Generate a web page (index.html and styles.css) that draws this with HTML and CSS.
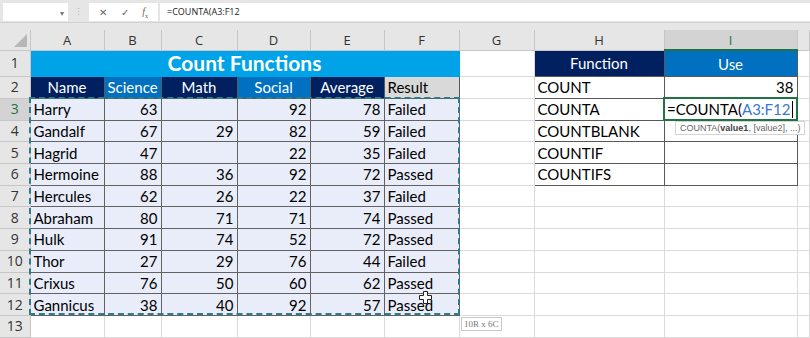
FILE: index.html
```html
<!DOCTYPE html>
<html lang="en">
    <head>
        <meta charset="UTF-8">
        <meta name="viewport" content="width=device-width, initial-scale=1.0">
        <title>Count Functions</title>
        <link rel="stylesheet" href="styles.css">
    </head>
    <body>
        <div class="formula-bar">
            <div class="name-box"><span class="caret">&#9662;</span></div>
            <div class="grip">&#8942;</div>
            <div class="fx-buttons">
                <span class="btn">&#10005;</span>
                <span class="btn">&#10003;</span>
                <span class="btn fx"><i>f</i><sub>x</sub></span>
            </div>
            <div class="formula-input">=COUNTA(A3:F12</div>
        </div>

        <div class="sheet">
            <table class="grid">
                <colgroup>
                    <col class="c-rh">
                    <col class="c-a">
                    <col class="c-b">
                    <col class="c-c">
                    <col class="c-d">
                    <col class="c-e">
                    <col class="c-f">
                    <col class="c-g">
                    <col class="c-h">
                    <col class="c-i">
                    <col>
                </colgroup>
                <tr class="col-heads">
                    <th class="corner"><span class="tri"></span></th>
                    <th>A</th><th>B</th><th>C</th><th>D</th><th>E</th><th>F</th><th>G</th><th>H</th>
                    <th class="sel">I</th>
                    <th></th>
                </tr>
                <tr class="r-title">
                    <th class="rh">1</th>
                    <td colspan="6" class="title">Count Functions</td>
                    <td class="edge"></td>
                    <td class="hd navy">Function</td>
                    <td class="hd blue">Use</td>
                    <td></td>
                </tr>
                <tr class="r-head">
                    <th class="rh">2</th>
                    <td class="hd navy">Name</td>
                    <td class="hd blue">Science</td>
                    <td class="hd navy">Math</td>
                    <td class="hd blue">Social</td>
                    <td class="hd navy">Average</td>
                    <td class="hd grey">Result</td>
                    <td class="edge"></td>
                    <td class="fn">COUNT</td>
                    <td class="fn num">38</td>
                    <td></td>
                </tr>
                <tr>
                    <th class="rh sel">3</th>
                    <td class="d">Harry</td><td class="d num">63</td><td class="d num"></td><td class="d num">92</td><td class="d num">78</td><td class="d">Failed</td>
                    <td class="edge"></td>
                    <td class="fn">COUNTA</td>
                    <td class="fn active">=COUNTA(<span class="ref">A3:F12</span><span class="caret-line"></span></td>
                    <td></td>
                </tr>
                <tr>
                    <th class="rh">4</th>
                    <td class="d">Gandalf</td><td class="d num">67</td><td class="d num">29</td><td class="d num">82</td><td class="d num">59</td><td class="d">Failed</td>
                    <td class="edge"></td>
                    <td class="fn">COUNTBLANK</td>
                    <td class="fn"></td>
                    <td></td>
                </tr>
                <tr>
                    <th class="rh">5</th>
                    <td class="d">Hagrid</td><td class="d num">47</td><td class="d num"></td><td class="d num">22</td><td class="d num">35</td><td class="d">Failed</td>
                    <td class="edge"></td>
                    <td class="fn">COUNTIF</td>
                    <td class="fn"></td>
                    <td></td>
                </tr>
                <tr>
                    <th class="rh">6</th>
                    <td class="d">Hermoine</td><td class="d num">88</td><td class="d num">36</td><td class="d num">92</td><td class="d num">72</td><td class="d">Passed</td>
                    <td class="edge"></td>
                    <td class="fn">COUNTIFS</td>
                    <td class="fn"></td>
                    <td></td>
                </tr>
                <tr>
                    <th class="rh">7</th>
                    <td class="d">Hercules</td><td class="d num">62</td><td class="d num">26</td><td class="d num">22</td><td class="d num">37</td><td class="d">Failed</td>
                    <td></td><td></td><td></td><td></td>
                </tr>
                <tr>
                    <th class="rh">8</th>
                    <td class="d">Abraham</td><td class="d num">80</td><td class="d num">71</td><td class="d num">71</td><td class="d num">74</td><td class="d">Passed</td>
                    <td></td><td></td><td></td><td></td>
                </tr>
                <tr>
                    <th class="rh">9</th>
                    <td class="d">Hulk</td><td class="d num">91</td><td class="d num">74</td><td class="d num">52</td><td class="d num">72</td><td class="d">Passed</td>
                    <td></td><td></td><td></td><td></td>
                </tr>
                <tr>
                    <th class="rh">10</th>
                    <td class="d">Thor</td><td class="d num">27</td><td class="d num">29</td><td class="d num">76</td><td class="d num">44</td><td class="d">Failed</td>
                    <td></td><td></td><td></td><td></td>
                </tr>
                <tr>
                    <th class="rh">11</th>
                    <td class="d">Crixus</td><td class="d num">76</td><td class="d num">50</td><td class="d num">60</td><td class="d num">62</td><td class="d">Passed</td>
                    <td></td><td></td><td></td><td></td>
                </tr>
                <tr>
                    <th class="rh">12</th>
                    <td class="d">Gannicus</td><td class="d num">38</td><td class="d num">40</td><td class="d num">92</td><td class="d num">57</td><td class="d">Passed</td>
                    <td></td><td></td><td></td><td></td>
                </tr>
                <tr>
                    <th class="rh">13</th>
                    <td></td><td></td><td></td><td></td><td></td><td></td><td></td><td></td><td></td><td></td>
                </tr>
            </table>

            <div class="marquee"></div>
            <div class="tip-args">COUNTA(<b>value1</b>, [value2], ...)</div>
            <div class="tip-size">10R x 6C</div>
            <svg class="move-cursor" width="13" height="13" viewBox="0 0 13 13">
                <path d="M4.5 0.5h4v4h4v4h-4v4h-4v-4h-4v-4h4z" fill="#fff" stroke="#222" stroke-width="1"/>
            </svg>
        </div>
    </body>
</html>
```

FILE: styles.css
```css
body {
    margin: 0;
    width: 810px;
    height: 338px;
    overflow: hidden;
    background: #fff;
    font-family: Lato, "Liberation Sans", sans-serif;
}

/* formula bar */
.formula-bar {
    display: flex;
    align-items: stretch;
    height: 18px;
    padding: 3px 0 1px 3px;
    background: #e6e6e6;
    font-family: "Open Sans", "Liberation Sans", sans-serif;
    font-size: 9px;
    color: #444;
}
.name-box {
    width: 65px;
    background: #fff;
    display: flex;
    justify-content: flex-end;
    align-items: center;
    padding-right: 4px;
    box-sizing: border-box;
}
.name-box .caret {
    font-size: 8px;
    color: #777;
}
.grip {
    width: 21px;
    text-align: center;
    color: #b5b5b5;
    line-height: 18px;
}
.fx-buttons {
    width: 69px;
    background: #fff;
    display: flex;
    align-items: center;
    justify-content: space-around;
    padding: 0 3px;
    box-sizing: border-box;
    color: #666;
}
.fx-buttons .btn {
    font-size: 10px;
}
.fx-buttons .fx {
    font-family: "Liberation Serif", serif;
    font-size: 10px;
}
.fx-buttons .fx sub {
    font-size: 6px;
}
.formula-input {
    flex: 1;
    margin-left: 2px;
    background: #fff;
    padding-left: 7px;
    line-height: 18px;
    color: #222;
}

/* sheet */
.sheet {
    position: relative;
    border-top: 1px solid #d0d0d0;
    background: #e6e6e6;
    padding-top: 7px;
}
.grid {
    border-collapse: collapse;
    table-layout: fixed;
    width: 810px;
    font-size: 15px;
    color: #000;
    background: #fff;
}
.c-rh { width: 30px; }
.c-a { width: 74px; }
.c-b { width: 57px; }
.c-c { width: 76px; }
.c-d { width: 73px; }
.c-e { width: 74px; }
.c-f { width: 75px; }
.c-g { width: 75px; }
.c-h { width: 130px; }
.c-i { width: 133px; }

tr {
    height: 21.7px;
}
td {
    border: 1px solid #dadada;
    padding: 0 3px;
    height: 20px;
    white-space: nowrap;
    overflow: visible;
    line-height: 18px;
}

.col-heads {
    height: 20px;
}
.col-heads th {
    height: 19px;
    background: #e6e6e6;
    border: 1px solid #c6c6c6;
    border-top: none;
    font-family: "Open Sans", "Liberation Sans", sans-serif;
    font-weight: normal;
    font-size: 13px;
    color: #333;
    line-height: 18px;
    padding: 0;
}
.col-heads th.sel {
    background: #d3d3d3;
    color: #217346;
    border-bottom: 2px solid #217346;
}
.col-heads .corner {
    position: relative;
    border-left: none;
}
.corner .tri {
    position: absolute;
    right: 3px;
    bottom: 3px;
    width: 0;
    height: 0;
    border-left: 13px solid transparent;
    border-bottom: 13px solid #b7b7b7;
}

th.rh {
    background: #e6e6e6;
    border: 1px solid #c6c6c6;
    border-left: none;
    font-family: "Open Sans", "Liberation Sans", sans-serif;
    font-weight: normal;
    font-size: 14px;
    line-height: 18px;
    color: #333;
    padding: 0;
}
th.rh.sel {
    background: #d3d3d3;
    color: #217346;
}

.r-title {
    height: 26px;
}
.r-title td {
    height: 25px;
}
.title {
    background: #00a2e8;
    color: #fff;
    font-weight: bold;
    font-size: 21px;
    text-align: center;
    border-color: #00a2e8;
}

.hd {
    text-align: center;
    color: #fff;
    border-color: #595959;
}
.hd.navy { background: #002060; }
.hd.blue { background: #0070c0; }
.hd.grey {
    background: #d9d9d9;
    color: #000;
    text-align: left;
}

.d {
    background: #e8edf9;
    border: 1px solid #626262;
}
.num {
    text-align: right;
}

.fn {
    border: 1px solid #595959;
    background: #fff;
}
.fn.active {
    border: 2px solid #217346;
    padding-left: 2px;
}
.ref {
    color: #3b78d0;
}
.caret-line {
    display: inline-block;
    width: 1px;
    height: 17px;
    margin-left: 2px;
    vertical-align: -3px;
    background: #000;
}

/* overlays */
.marquee {
    position: absolute;
    left: 29px;
    top: 74px;
    width: 427px;
    height: 214px;
    border: 2px dashed #2f7c86;
    pointer-events: none;
}
.tip-args {
    position: absolute;
    left: 675px;
    top: 98px;
    padding: 1px 4px;
    background: #fff;
    border: 1px solid #d4d4d4;
    font-family: "Liberation Sans", sans-serif;
    font-size: 9px;
    color: #666;
    white-space: nowrap;
}
.tip-args b {
    color: #444;
}
.tip-size {
    position: absolute;
    left: 461px;
    top: 294px;
    padding: 1px 2px;
    background: #fff;
    border: 1px solid #c8c8c8;
    font-family: "Liberation Serif", serif;
    font-size: 9px;
    color: #777;
}
.move-cursor {
    position: absolute;
    left: 419px;
    top: 268px;
}
```
